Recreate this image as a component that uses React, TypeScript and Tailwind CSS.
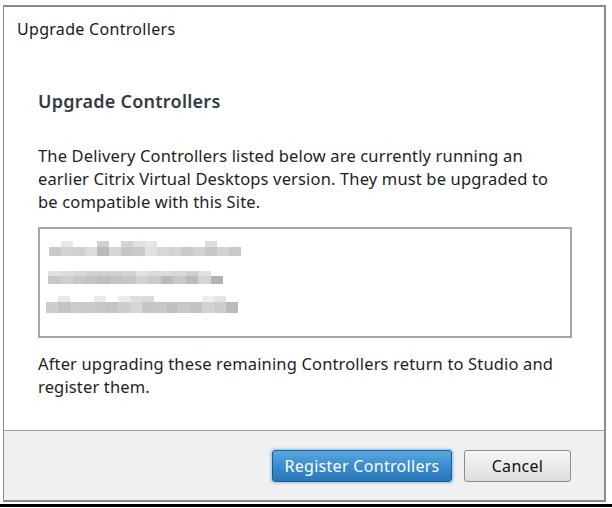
import React from "react";

const cells1 = ["#c9c9cc", "#d3d2d4", "#cfcfd0", "#dbdcde", "#b9b9bb", "#d6d6d8", "#c4c5c8", "#cdc9ca", "#dfe1e3", "#d8d6d7", "#d3d4d8", "#cbc8c9", "#d2d2d4", "#c5c6c8", "#d4d2d3", "#c8c9cc"];
const tops1 = ["", "#e8e8ea", "", "", "#d0d0d2", "", "#d4d4d6", "#e4dfe0", "#e1e8ec", "", "", "", "", "#dcdde0", "", ""];

const cells2 = ["#c8c8ca", "#cfcfd1", "#c6c6c7", "#bfc3c8", "#bdbfbe", "#c3c4c7", "#c6c5c8", "#d2d1d3", "#c9cacd", "#b8bcbf", "#cac7c7", "#b9bbbd", "#d4d4d4", "#b2b2b4"];
const tops2 = ["#e0e0e2", "#dcdcde", "#d8d8da", "#cdd1d6", "#d0d1d1", "#d0d0d3", "#d4d3d6", "#e2e2e3", "#d9dadc", "#d9dde0", "#dad8d8", "#cdcfd0", "#e0e0e0", ""];

const cells3 = ["#d0cccc", "#c3c3c5", "#cccbcb", "#c9c9ca", "#c7c7c8", "#c4c4c6", "#cecccc", "#d6d6d7", "#c5c5c7", "#c8c6c6", "#c1c1c3", "#cbc6c6", "#c3c3c5", "#d1d1d3", "#cdcbcb", "#b8babd"];
const tops3 = ["", "#e8e8ea", "", "", "#eaeaea", "", "#ececec", "#dedede", "#dcdcdc", "", "", "", "", "#eeeeee", "#e4e4e4", ""];

function Blur({ cells, tops, w, topH, botH }: { cells: string[]; tops: string[]; w: number; topH: number; botH: number }) {
  return (
    <div className="flex flex-col">
      <div className="flex" style={{ height: topH }}>
        {tops.map((c, i) => (
          <div key={i} style={{ width: w, background: c || "transparent" }} className="h-full" />
        ))}
      </div>
      <div className="flex" style={{ height: botH }}>
        {cells.map((c, i) => (
          <div key={i} style={{ width: w, background: c }} className="h-full" />
        ))}
      </div>
    </div>
  );
}

const font = { fontFamily: '"Noto Sans", "Open Sans", sans-serif' };

export default function App() {
  return (
    <div className="w-[612px] h-[508px] bg-white relative overflow-hidden" style={font}>
      <div className="ml-[3px] mt-[5px] w-[603px] h-[497px] border-t-2 border-l border-r-2 border-b-2 border-[#8a8a8a] flex flex-col">
        <div className="flex-1 bg-white flex flex-col">
          <div className="pl-[13px] pt-[12px] text-[16px] tracking-[0.3px] leading-[20px] text-[#1a1a1a]">
            Upgrade Controllers
          </div>
          <div className="pl-[34px] pt-[51px]">
            <div className="text-[18px] tracking-[0.25px] font-semibold leading-[22px] text-[#333a44]">
              Upgrade Controllers
            </div>
            <div className="mt-[32px] text-[16.5px] tracking-[0.15px] leading-[23px] text-[#1e1e1e] whitespace-nowrap">
              The Delivery Controllers listed below are currently running an
              <br />
              earlier Citrix Virtual Desktops version. They must be upgraded to
              <br />
              be compatible with this Site.
            </div>
            <div className="mt-[14px] w-[534px] h-[111px] border-2 border-[#a6a6a6] bg-white flex flex-col pt-[12px] pl-[9px]">
              <Blur cells={cells1} tops={tops1} w={12} topH={6} botH={9} />
              <div className="ml-[-1px] mt-[15px]">
                <Blur cells={cells2} tops={tops2} w={12.5} topH={5} botH={8} />
              </div>
              <div className="ml-[-3px] mt-[12px]">
                <Blur cells={cells3} tops={tops3} w={12} topH={6} botH={11} />
              </div>
            </div>
            <div className="mt-[14px] text-[16.5px] tracking-[0.15px] leading-[23px] text-[#1e1e1e] whitespace-nowrap">
              After upgrading these remaining Controllers return to Studio and
              <br />
              register them.
            </div>
          </div>
        </div>
        <div className="h-[70px] border-t border-[#a0a0a0] bg-[#f0f0f0] flex justify-end items-start pt-[19px] pr-[33px] gap-[12px]">
          <button
            className="w-[180px] h-[32px] rounded-[3px] border border-[#1d5d91] text-white text-[16px] tracking-[0.3px] leading-none bg-gradient-to-b from-[#5aa8df] via-[#3a8cd0] to-[#2a76b7] shadow-[0_0_3px_1px_rgba(70,150,220,0.6)]"
            style={font}
          >
            Register Controllers
          </button>
          <button
            className="w-[107px] h-[32px] rounded-[3px] border border-[#8c8c8c] text-[#111] text-[16px] tracking-[0.3px] leading-none bg-gradient-to-b from-[#f6f6f6] to-[#dedede]"
            style={font}
          >
            Cancel
          </button>
        </div>
      </div>
      <div className="mt-[2px] h-[3px] bg-black" />
    </div>
  );
}
